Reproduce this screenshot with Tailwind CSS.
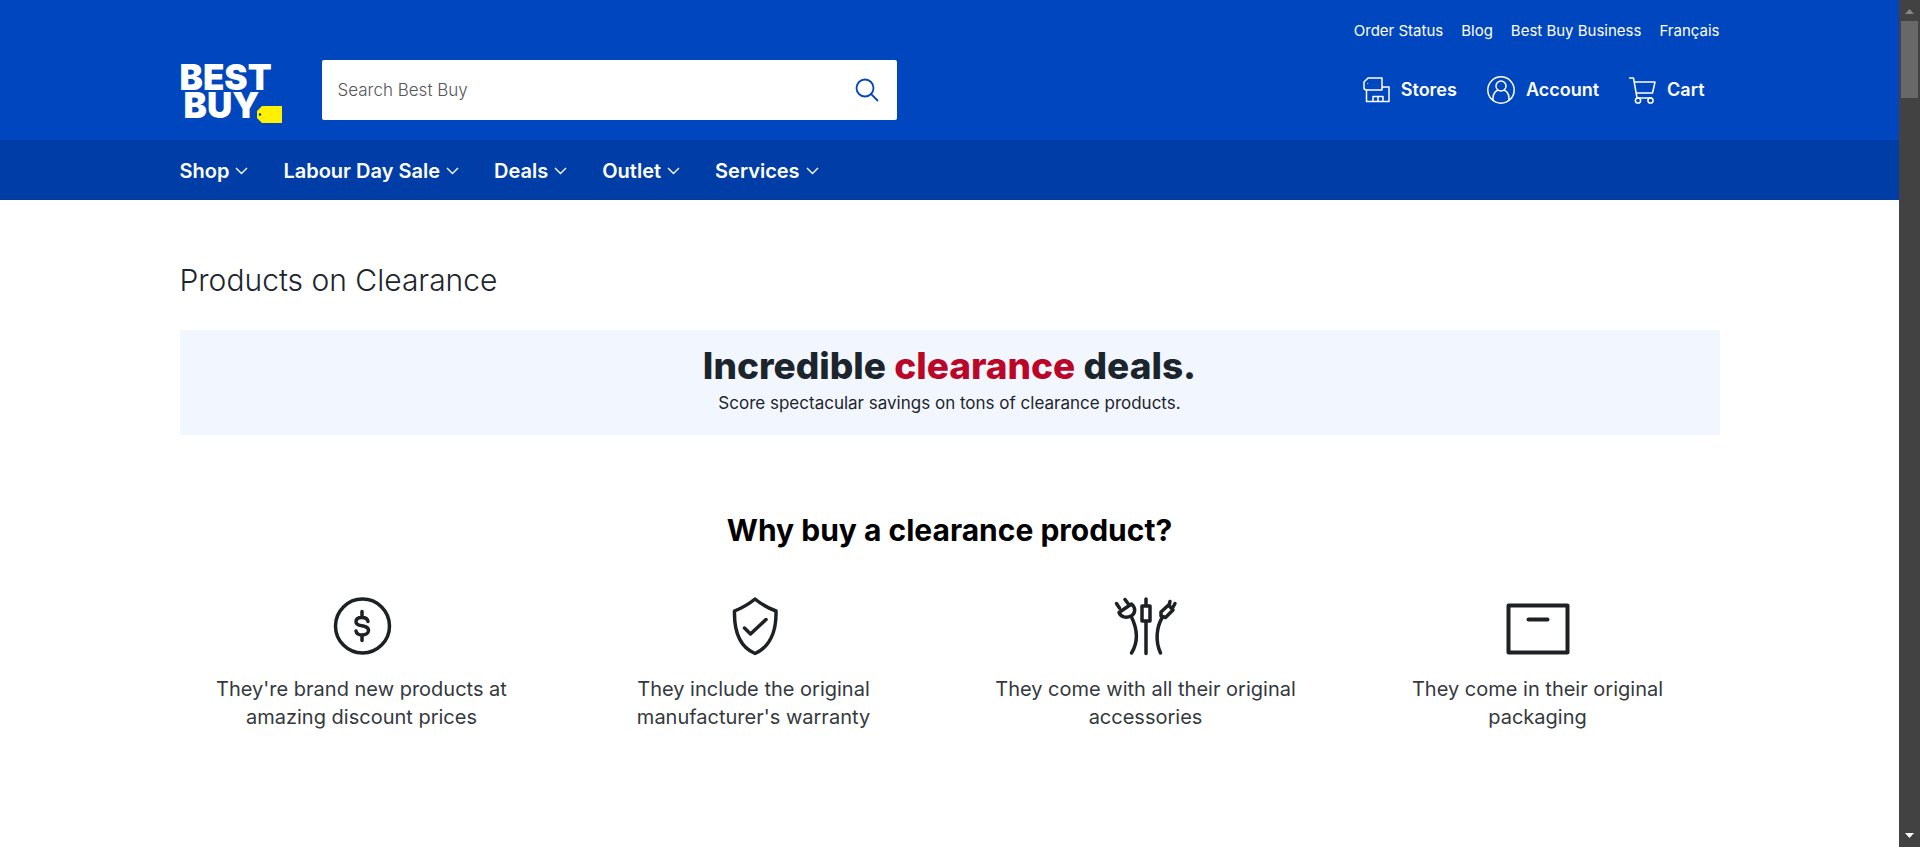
<!DOCTYPE html>
<html lang="en">
<head>
<meta charset="utf-8">
<meta name="viewport" content="width=device-width, initial-scale=1">
<title>Products on Clearance | Best Buy Canada</title>
<script src="https://cdn.jsdelivr.net/npm/@tailwindcss/browser@4"></script>
</head>
<body class="flex h-screen overflow-hidden bg-white font-['Inter','Liberation_Sans',sans-serif] text-[#1d252c]">
<div class="min-w-0 flex-1 overflow-hidden">
  <header class="text-white">
    <div class="bg-[#0046be] px-6">
      <div class="mx-auto flex h-[140px] max-w-[1540px] flex-col">
        <nav aria-label="Secondary" class="flex h-[60px] items-center justify-end gap-[18px] pt-0.5 text-[15px]">
          <a href="#">Order Status</a>
          <a href="#">Blog</a>
          <a href="#">Best Buy Business</a>
          <a href="#">Français</a>
        </nav>
        <div class="flex h-[60px] items-center">
          <a href="#" aria-label="Best Buy" class="relative mr-10 block w-[102px] pt-0.5 text-[35px] leading-7 font-black">
            <span class="block">BEST</span>
            <span class="block pl-1">BUY</span>
            <svg class="absolute right-0 -bottom-1" width="25" height="17" viewBox="0 0 25 17" aria-hidden="true"><path d="M5 0H25V17H5L0 12V5Z" fill="#fff200"/><circle cx="3" cy="8.500" r="1.200" fill="#1d252c"/></svg>
          </a>
          <form role="search" class="flex h-[60px] w-[575px] items-center rounded-xs bg-white px-4">
            <input type="search" aria-label="Search Best Buy" placeholder="Search Best Buy" class="min-w-0 flex-1 pt-0.5 text-[17px] text-[#1d252c] outline-none placeholder:font-light placeholder:text-[#55555a]">
            <button type="submit" aria-label="Search" class="flex size-7 items-center justify-center">
              <svg width="24" height="24" viewBox="0 0 24 24" fill="none" stroke="#0046be" stroke-width="1.800" stroke-linecap="round"><circle cx="10" cy="10" r="8.500"/><path d="M16.200 16.200 22.500 22.500"/></svg>
            </button>
          </form>
          <nav aria-label="Account" class="mr-[15px] ml-auto flex items-center gap-[30px] text-lg font-semibold">
            <a href="#" class="flex items-center gap-[11px]">
              <svg width="27" height="26" viewBox="0 0 27 26" fill="none" stroke="currentColor" stroke-width="1.500" stroke-linejoin="round"><path d="M5 1H19V13H3.500C2 13 1 12 1 10.500V5Z"/><circle cx="4.700" cy="6.500" r=".6" fill="currentColor" stroke="none"/><path d="M3.500 13V24.500H26V10H19M10 24.500V19.500H20V24.500M15 19.500V24.500"/></svg>
              Stores
            </a>
            <a href="#" class="flex items-center gap-[11px]">
              <svg width="28" height="28" viewBox="0 0 28 28" fill="none" stroke="currentColor" stroke-width="1.500"><circle cx="14" cy="14" r="13.200"/><circle cx="14" cy="10" r="5"/><path d="M6 24.500V22C6 17.500 9 14.500 11 14.200M17 14.200C19 14.500 22 17.500 22 22V24.500"/></svg>
              Account
            </a>
            <a href="#" class="flex items-center gap-[11px]">
              <svg width="27" height="27" viewBox="0 0 27 27" fill="none" stroke="currentColor" stroke-width="1.500" stroke-linejoin="round"><path d="M0 1H4.500L8 21H23M5.300 5H26L23.500 16H7.200"/><circle cx="9" cy="23.500" r="2.600"/><circle cx="21.500" cy="23.500" r="2.600"/></svg>
              Cart
            </a>
          </nav>
        </div>
      </div>
    </div>
    <div class="bg-[#003da6] px-6">
      <nav aria-label="Main" class="mx-auto flex h-[60px] max-w-[1540px] items-center gap-[35px] pt-0.5 text-xl font-semibold">
        <button type="button" class="flex items-center gap-1.5">Shop <svg width="13" height="8" viewBox="0 0 12 8" fill="none" stroke="currentColor" stroke-width="1.400"><path d="M.5 1 6 6.500 11.500 1"/></svg></button>
        <button type="button" class="flex items-center gap-1.5">Labour Day Sale <svg width="13" height="8" viewBox="0 0 12 8" fill="none" stroke="currentColor" stroke-width="1.400"><path d="M.5 1 6 6.500 11.500 1"/></svg></button>
        <button type="button" class="flex items-center gap-1.5">Deals <svg width="13" height="8" viewBox="0 0 12 8" fill="none" stroke="currentColor" stroke-width="1.400"><path d="M.5 1 6 6.500 11.500 1"/></svg></button>
        <button type="button" class="flex items-center gap-1.5">Outlet <svg width="13" height="8" viewBox="0 0 12 8" fill="none" stroke="currentColor" stroke-width="1.400"><path d="M.5 1 6 6.500 11.500 1"/></svg></button>
        <button type="button" class="flex items-center gap-1.5">Services <svg width="13" height="8" viewBox="0 0 12 8" fill="none" stroke="currentColor" stroke-width="1.400"><path d="M.5 1 6 6.500 11.500 1"/></svg></button>
      </nav>
    </div>
  </header>

  <main class="px-6">
    <div class="mx-auto max-w-[1540px] pt-[60px]">
      <h1 class="text-[30px] leading-10 font-light">Products on Clearance</h1>

      <section class="mt-[30px] bg-[#f2f7ff] pt-4 pb-[18px] text-center">
        <h2 class="text-[37px] leading-10 font-extrabold">Incredible <span class="text-[#bb0628]">clearance</span> deals.</h2>
        <p class="pt-[3px] text-[17px] leading-7">Score spectacular savings on tons of clearance products.</p>
      </section>

      <section class="pt-[79px]">
        <h2 class="text-center text-[30px] leading-8 font-bold text-black">Why buy a clearance product?</h2>
        <ul class="-mx-3.5 mt-[51px] grid grid-cols-4 text-center text-xl leading-7 text-[#34393d]">
          <li class="flex flex-col items-center gap-[18px]">
            <svg width="64" height="60" viewBox="0 0 64 60" fill="none" stroke="#1d2124" stroke-width="3.500" stroke-linecap="round"><circle cx="32.500" cy="29" r="27"/><path d="M38 24.500C37.500 21.500 35 20.500 32 20.500C28.500 20.500 26 22 26 24.700C26 31 38.500 26.500 38.500 33.500C38.500 36.500 35.500 38 32 38C28.500 38 26.500 36.700 26 34M32 14.500V20M32 38V43.500"/></svg>
            <p class="max-w-[310px]">They're brand new products at amazing discount prices</p>
          </li>
          <li class="flex flex-col items-center gap-[18px]">
            <svg width="64" height="60" viewBox="0 0 64 60" fill="none" stroke="#1d2124" stroke-width="3.500" stroke-linecap="round" stroke-linejoin="round"><path d="M33 2C27 7 20 11 12.500 14C12 34 18 50 33 56.500C48 50 54.500 34 54 14C46 11 39 7 33 2Z"/><path d="M22.500 31 28.500 37 44 22.500"/></svg>
            <p class="max-w-[260px]">They include the original manufacturer's warranty</p>
          </li>
          <li class="flex flex-col items-center gap-[18px]">
            <svg width="64" height="60" viewBox="0 0 64 60" fill="none" stroke="#1d2124" stroke-width="3.500" stroke-linecap="round" stroke-linejoin="round"><path d="M5 15.500 17.500 7C22 11 21.500 16.500 17 19C12 21.500 7 20 5 15.500ZM5.500 11 2.500 6.500M14 6.500 11 2.500M17 19C23 31 25 44 17.500 56M32 2V9M28 9H36V24H28ZM32 24V56.500M47 15 54.500 8 59 13 51.500 20.500 47 19ZM55 8.500 56 4.500M58.500 11 61 6.500M48.500 20C42.500 30 41 44 46.500 56"/></svg>
            <p class="max-w-[320px]">They come with all their original accessories</p>
          </li>
          <li class="flex flex-col items-center gap-[18px]">
            <svg width="64" height="60" viewBox="0 0 64 60" fill="none" stroke="#1d2124" stroke-width="4" stroke-linecap="round" stroke-linejoin="round"><path d="M2.500 8.500H61.500V55.500H2.500ZM22.500 22.500H41.500"/></svg>
            <p class="max-w-[280px]">They come in their original packaging</p>
          </li>
        </ul>
      </section>
    </div>
  </main>
</div>
<div aria-hidden="true" class="flex w-[21px] shrink-0 flex-col items-center justify-between bg-[#424242] pb-[9px]">
  <div class="flex w-full flex-col items-center pt-[9px]">
    <svg width="9" height="5" viewBox="0 0 9 5"><path d="M4.500 0 9 5H0Z" fill="#858585"/></svg>
    <div class="mt-[7px] h-[77px] w-[17px] bg-[#686868]"></div>
  </div>
  <svg width="9" height="5" viewBox="0 0 9 5"><path d="M0 0H9L4.500 5Z" fill="#fff"/></svg>
</div>
</body>
</html>
